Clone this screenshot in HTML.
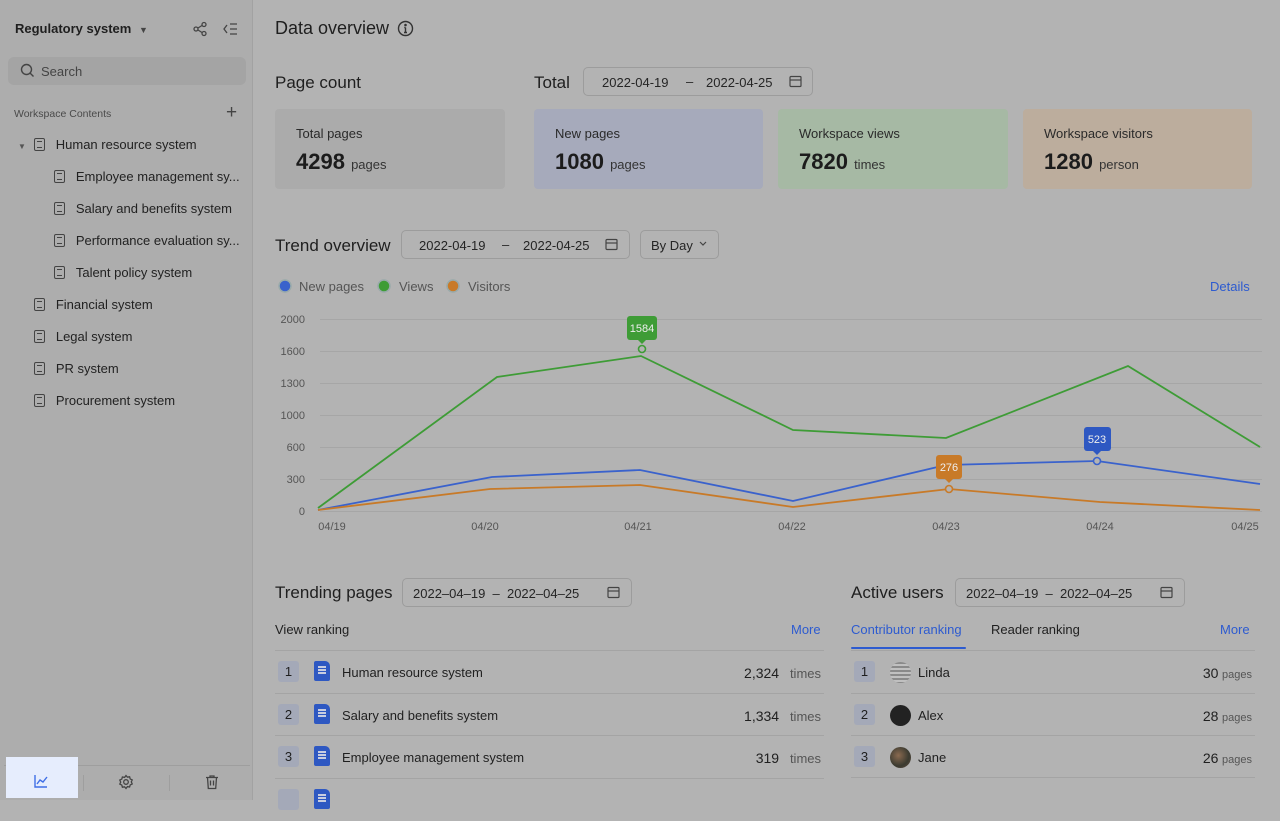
<!DOCTYPE html>
<html style="background:#b3b3b3"><head><meta charset="utf-8"><style>
*{box-sizing:border-box;margin:0;padding:0}
body{width:1280px;height:800px;overflow:hidden;background:#b3b3b3;font-family:"Liberation Sans",sans-serif;color:#1f1f1f;position:relative}
.a{position:absolute;white-space:nowrap}
.side{position:absolute;left:0;top:0;width:253px;height:800px;background:#adadad;border-right:1px solid #a2a2a2}
.tree{font-size:13px;color:#222}
.doc{display:inline-block;width:11px;height:13px;border:1.3px solid #444;border-radius:2px;vertical-align:-2px;position:relative}
.doc:after{content:"";position:absolute;left:2px;top:2px;width:5px;height:5px;border-top:1.2px solid #444;border-bottom:1.2px solid #444}
.card{position:absolute;top:109px;height:80px;border-radius:4px}
.card .l{position:absolute;left:21px;top:17px;font-size:13px;color:#2a2a2a}
.card .v{position:absolute;left:21px;top:40px;font-size:22px;font-weight:bold;color:#1c1c1c}
.card .v span{font-size:13px;font-weight:normal;color:#333}
.dp{position:absolute;height:29px;border:1px solid #9c9c9c;border-radius:5px;font-size:13px;color:#252525}
h2{position:absolute;font-size:17px;font-weight:normal;white-space:nowrap}
.row{position:absolute;height:43px;border-top:1px solid #a4a4a4;font-size:13px}
.rk{position:absolute;left:3px;top:10px;width:21px;height:21px;background:#a4a9b8;border-radius:3px;text-align:center;line-height:21px;font-size:13px}
.pi{position:absolute;left:39px;top:10px;width:16px;height:20px;background:#2e58c2;border-radius:2px 5px 2px 2px}
.pi:before{content:"";position:absolute;left:4px;top:5px;width:8px;height:1.5px;background:#c8cde0;box-shadow:0 3px 0 #c8cde0,0 6px 0 #c8cde0}
.tl{font-size:11px;fill:#555}
</style></head><body>
<div class="side">
<div class="a" style="left:15px;top:21px;font-size:13px;font-weight:bold;color:#1f1f1f">Regulatory system <span style="font-size:9px;color:#444;margin-left:4px">▼</span></div>
<svg class="a" style="left:192px;top:21px" width="16" height="16" viewBox="0 0 16 16" fill="none" stroke="#444" stroke-width="1.3"><circle cx="12" cy="3.5" r="2"/><circle cx="4" cy="8" r="2"/><circle cx="12" cy="12.5" r="2"/><path d="M6 7l4-2.5M6 9l4 2.5"/></svg>
<svg class="a" style="left:222px;top:21px" width="16" height="16" viewBox="0 0 16 16" fill="none" stroke="#444" stroke-width="1.3"><path d="M5 4L2 8l3 4M8 3h7M8 8h7M8 13h7"/></svg>
<div class="a" style="left:8px;top:57px;width:238px;height:28px;background:#a4a4a4;border-radius:6px"></div>
<svg class="a" style="left:20px;top:63px" width="15" height="15" viewBox="0 0 15 15" fill="none" stroke="#444" stroke-width="1.4"><circle cx="6.5" cy="6.5" r="5"/><path d="M10 10l3.5 3.5"/></svg>
<div class="a" style="left:41px;top:64px;font-size:13px;color:#444">Search</div>
<div class="a" style="left:14px;top:108px;font-size:10.5px;color:#4a4a4a">Workspace Contents</div>
<div class="a" style="left:226px;top:102px;font-size:19px;color:#444;font-weight:300">+</div>
<div class="a tree" style="left:18px;top:137px"><span style="font-size:8px;color:#555;margin-right:8px">▼</span><span class="doc"></span>&nbsp;&nbsp;&nbsp;Human resource system</div>
<div class="a tree" style="left:54px;top:169px"><span class="doc"></span>&nbsp;&nbsp;&nbsp;Employee management sy...</div>
<div class="a tree" style="left:54px;top:201px"><span class="doc"></span>&nbsp;&nbsp;&nbsp;Salary and benefits system</div>
<div class="a tree" style="left:54px;top:233px"><span class="doc"></span>&nbsp;&nbsp;&nbsp;Performance evaluation sy...</div>
<div class="a tree" style="left:54px;top:265px"><span class="doc"></span>&nbsp;&nbsp;&nbsp;Talent policy system</div>
<div class="a tree" style="left:34px;top:297px"><span class="doc"></span>&nbsp;&nbsp;&nbsp;Financial system</div>
<div class="a tree" style="left:34px;top:329px"><span class="doc"></span>&nbsp;&nbsp;&nbsp;Legal system</div>
<div class="a tree" style="left:34px;top:361px"><span class="doc"></span>&nbsp;&nbsp;&nbsp;PR system</div>
<div class="a tree" style="left:34px;top:393px"><span class="doc"></span>&nbsp;&nbsp;&nbsp;Procurement system</div>
<div class="a" style="left:4px;top:765px;width:246px;height:1px;background:#9e9e9e"></div>
<div class="a" style="left:83px;top:775px;width:1px;height:16px;background:#9e9e9e"></div>
<div class="a" style="left:169px;top:775px;width:1px;height:16px;background:#9e9e9e"></div>
<svg class="a" style="left:118px;top:774px" width="16" height="16" viewBox="0 0 16 16" fill="none" stroke="#444" stroke-width="1.3"><circle cx="8" cy="8" r="2.3"/><path d="M8 1.5l1.4 1.7 2.2-.4.6 2.1 2 1-.9 2 .9 2-2 1-.6 2.1-2.2-.4L8 14.5l-1.4-1.7-2.2.4-.6-2.1-2-1 .9-2-.9-2 2-1 .6-2.1 2.2.4z"/></svg>
<svg class="a" style="left:204px;top:774px" width="16" height="16" viewBox="0 0 16 16" fill="none" stroke="#444" stroke-width="1.3"><path d="M2 3.5h12M6 3.5V2h4v1.5M3.5 3.5l.8 11h7.4l.8-11M6.5 6.5v5M9.5 6.5v5"/></svg>
</div>
<div class="a" style="left:6px;top:757px;width:72px;height:41px;background:#e6edfd"></div>
<svg class="a" style="left:33px;top:773px" width="16" height="16" viewBox="0 0 16 16" fill="none" stroke="#3f6fe6" stroke-width="1.4"><path d="M2 2v12h12M4 11l3-4 3 2 4-5"/></svg>

<h2 style="left:275px;top:18px;font-size:18px">Data overview</h2>
<svg class="a" style="left:397px;top:20px" width="17" height="17" viewBox="0 0 17 17" fill="none" stroke="#333" stroke-width="1.4"><circle cx="8.5" cy="8.5" r="7"/><path d="M8.5 7.5v5M7 12.5h3M7.3 7.5h1.2"/><circle cx="8.5" cy="5" r=".6" fill="#333"/></svg>
<h2 style="left:275px;top:73px">Page count</h2>
<h2 style="left:534px;top:73px">Total</h2>
<div class="dp" style="left:583px;top:67px;width:230px"><span class="a" style="left:18px;top:7px">2022-04-19</span><span class="a" style="left:102px;top:6px">–</span><span class="a" style="left:122px;top:7px">2022-04-25</span></div>
<svg class="a" style="left:789px;top:75px" width="13" height="13" viewBox="0 0 13 13" fill="none" stroke="#444" stroke-width="1.2"><rect x="1" y="1.5" width="11" height="10" rx="1"/><path d="M1 5h11"/></svg>
<div class="card" style="left:275px;width:230px;background:#ababab"><div class="l">Total pages</div><div class="v">4298 <span>pages</span></div></div>
<div class="card" style="left:534px;width:229px;background:#a6aabb"><div class="l">New pages</div><div class="v">1080 <span>pages</span></div></div>
<div class="card" style="left:778px;width:230px;background:#a6b9a4"><div class="l">Workspace views</div><div class="v">7820 <span>times</span></div></div>
<div class="card" style="left:1023px;width:229px;background:#bcad9d"><div class="l">Workspace visitors</div><div class="v">1280 <span>person</span></div></div>

<h2 style="left:275px;top:236px">Trend overview</h2>
<div class="dp" style="left:401px;top:230px;width:229px"><span class="a" style="left:17px;top:7px">2022-04-19</span><span class="a" style="left:100px;top:6px">–</span><span class="a" style="left:121px;top:7px">2022-04-25</span></div>
<svg class="a" style="left:605px;top:238px" width="13" height="13" viewBox="0 0 13 13" fill="none" stroke="#444" stroke-width="1.2"><rect x="1" y="1.5" width="11" height="10" rx="1"/><path d="M1 5h11"/></svg>
<div class="dp" style="left:640px;top:230px;width:79px"><span class="a" style="left:10px;top:7px">By Day</span></div>
<svg class="a" style="left:698px;top:240px" width="10" height="8" viewBox="0 0 10 8" fill="none" stroke="#444" stroke-width="1.2"><path d="M2 2l3 3 3-3"/></svg>
<svg class="a" style="left:0;top:0" width="1280" height="560">
<g font-family="Liberation Sans" font-size="13" fill="#555">
<circle cx="285" cy="286" r="6" fill="#3a62cc" stroke="#9aa" stroke-width="1.5"/><text x="299" y="291">New pages</text>
<circle cx="384" cy="286" r="6" fill="#3e9c36" stroke="#9aa" stroke-width="1.5"/><text x="399" y="291">Views</text>
<circle cx="453" cy="286" r="6" fill="#c87a28" stroke="#9aa" stroke-width="1.5"/><text x="468" y="291">Visitors</text>
<text x="1210" y="291" fill="#2d5bd0">Details</text>
</g>
<g stroke="#a6a6a6" stroke-width="1"><path d="M320 319.5H1262M320 351.5H1262M320 383.5H1262M320 415.5H1262M320 447.5H1262M320 479.5H1262M320 511.5H1262"/></g>
<g class="tl" font-family="Liberation Sans" text-anchor="end"><text x="305" y="323">2000</text><text x="305" y="355">1600</text><text x="305" y="387">1300</text><text x="305" y="419">1000</text><text x="305" y="451">600</text><text x="305" y="483">300</text><text x="305" y="515">0</text></g>
<g class="tl" font-family="Liberation Sans" text-anchor="middle"><text x="332" y="530">04/19</text><text x="485" y="530">04/20</text><text x="638" y="530">04/21</text><text x="792" y="530">04/22</text><text x="946" y="530">04/23</text><text x="1100" y="530">04/24</text><text x="1245" y="530">04/25</text></g>
<g fill="none" stroke-width="1.8">
<polyline stroke="#3e9c36" points="318,508 497,377 641,356 793,430 946,438 1128,366 1260,447"/>
<polyline stroke="#3a62cc" points="318,510 492,477 640,470 793,501 946,465 1097,461 1260,484"/>
<polyline stroke="#c87a28" points="318,510 490,489 640,485 793,507 949,489 1100,502 1260,510"/>
</g>
<g font-family="Liberation Sans" font-size="11" fill="#eee" text-anchor="middle">
<rect x="627" y="316" width="30" height="24" rx="3" fill="#3e9c36"/><path d="M638 340l4 4 4-4z" fill="#3e9c36"/><text x="642" y="332">1584</text>
<circle cx="642" cy="349" r="3.5" fill="#b3b3b3" stroke="#3e9c36" stroke-width="1.6"/>
<rect x="1084" y="427" width="27" height="24" rx="3" fill="#2e58c2"/><path d="M1093 451l4 4 4-4z" fill="#2e58c2"/><text x="1097" y="443">523</text>
<circle cx="1097" cy="461" r="3.5" fill="#b3b3b3" stroke="#3a62cc" stroke-width="1.6"/>
<rect x="936" y="455" width="26" height="24" rx="3" fill="#c87a28"/><path d="M945 479l4 4 4-4z" fill="#c87a28"/><text x="949" y="471">276</text>
<circle cx="949" cy="489" r="3.5" fill="#b3b3b3" stroke="#c87a28" stroke-width="1.6"/>
</g>
</svg>

<h2 style="left:275px;top:583px">Trending pages</h2>
<div class="dp" style="left:402px;top:578px;width:230px"><span class="a" style="left:10px;top:7px">2022–04–19 &nbsp;–&nbsp; 2022–04–25</span></div>
<svg class="a" style="left:607px;top:586px" width="13" height="13" viewBox="0 0 13 13" fill="none" stroke="#444" stroke-width="1.2"><rect x="1" y="1.5" width="11" height="10" rx="1"/><path d="M1 5h11"/></svg>
<div class="a" style="left:275px;top:622px;font-size:13px">View ranking</div>
<div class="a" style="left:791px;top:622px;font-size:13px;color:#2d5bd0">More</div>
<div class="row" style="left:275px;top:650px;width:549px"><div class="rk">1</div><div class="pi"></div><span class="a" style="left:67px;top:14px">Human resource system</span><span class="a" style="right:3px;top:14px"><b style="font-weight:normal;font-size:14px">2,324</b>&nbsp;&nbsp; <span style="color:#555">times</span></span></div>
<div class="row" style="left:275px;top:693px;width:549px"><div class="rk">2</div><div class="pi"></div><span class="a" style="left:67px;top:14px">Salary and benefits system</span><span class="a" style="right:3px;top:14px"><b style="font-weight:normal;font-size:14px">1,334</b>&nbsp;&nbsp; <span style="color:#555">times</span></span></div>
<div class="row" style="left:275px;top:735px;width:549px"><div class="rk">3</div><div class="pi"></div><span class="a" style="left:67px;top:14px">Employee management system</span><span class="a" style="right:3px;top:14px"><b style="font-weight:normal;font-size:14px">319</b>&nbsp;&nbsp; <span style="color:#555">times</span></span></div>
<div class="row" style="left:275px;top:778px;width:549px"><div class="rk"></div><div class="pi"></div></div>

<h2 style="left:851px;top:583px">Active users</h2>
<div class="dp" style="left:955px;top:578px;width:230px"><span class="a" style="left:10px;top:7px">2022–04–19 &nbsp;–&nbsp; 2022–04–25</span></div>
<svg class="a" style="left:1160px;top:586px" width="13" height="13" viewBox="0 0 13 13" fill="none" stroke="#444" stroke-width="1.2"><rect x="1" y="1.5" width="11" height="10" rx="1"/><path d="M1 5h11"/></svg>
<div class="a" style="left:851px;top:622px;font-size:13px;color:#2d5bd0">Contributor ranking</div>
<div class="a" style="left:851px;top:647px;width:115px;height:2px;background:#2d5bd0;border-radius:1px"></div>
<div class="a" style="left:991px;top:622px;font-size:13px">Reader ranking</div>
<div class="a" style="left:1220px;top:622px;font-size:13px;color:#2d5bd0">More</div>
<div class="row" style="left:851px;top:650px;width:404px"><div class="rk" style="left:3px">1</div><div class="a" style="left:39px;top:11px;width:21px;height:21px;border-radius:50%;background:repeating-linear-gradient(#8a8a8a 0 2px,#c0c0c0 2px 4px)"></div><span class="a" style="left:67px;top:14px">Linda</span><span class="a" style="right:3px;top:14px"><span style="font-size:14px">30</span> <span style="color:#555;font-size:11px">pages</span></span></div>
<div class="row" style="left:851px;top:693px;width:404px"><div class="rk" style="left:3px">2</div><div class="a" style="left:39px;top:11px;width:21px;height:21px;border-radius:50%;background:#222"></div><span class="a" style="left:67px;top:14px">Alex</span><span class="a" style="right:3px;top:14px"><span style="font-size:14px">28</span> <span style="color:#555;font-size:11px">pages</span></span></div>
<div class="row" style="left:851px;top:735px;width:404px;border-bottom:1px solid #a4a4a4"><div class="rk" style="left:3px">3</div><div class="a" style="left:39px;top:11px;width:21px;height:21px;border-radius:50%;background:radial-gradient(circle at 40% 40%,#8a6a50,#3a3a30 60%,#6a5040)"></div><span class="a" style="left:67px;top:14px">Jane</span><span class="a" style="right:3px;top:14px"><span style="font-size:14px">26</span> <span style="color:#555;font-size:11px">pages</span></span></div>
</body></html>
